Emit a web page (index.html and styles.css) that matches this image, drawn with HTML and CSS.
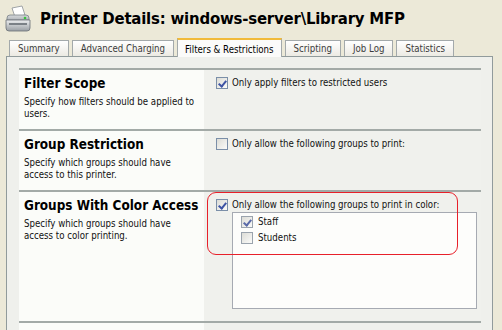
FILE: index.html
```html
<!DOCTYPE html>
<html>
<head>
<meta charset="utf-8">
<link rel="stylesheet" href="styles.css">
</head>
<body>
<div class="header">
  <svg class="printer-icon" width="28" height="28" viewBox="0 0 28 28">
    <defs>
      <linearGradient id="body" x1="0" y1="0" x2="0" y2="1">
        <stop offset="0" stop-color="#eceef0"/>
        <stop offset="1" stop-color="#9a9fa4"/>
      </linearGradient>
      <linearGradient id="top" x1="0" y1="0" x2="0" y2="1">
        <stop offset="0" stop-color="#d6d9dc"/>
        <stop offset="1" stop-color="#b2b6ba"/>
      </linearGradient>
    </defs>
    <path d="M8 3 L18 1 L21 10 L11 12 Z" fill="#ffffff" stroke="#8a8f96" stroke-width="0.8"/>
    <path d="M3 13 Q3 10 6 10 L22 10 Q25 10 25 13 L25 15 L3 15 Z" fill="url(#top)" stroke="#7a8086" stroke-width="0.8"/>
    <path d="M2 15 L26 15 L26 23 Q26 26 23 26 L5 26 Q2 26 2 23 Z" fill="url(#body)" stroke="#6a7076" stroke-width="0.8"/>
    <rect x="5" y="18" width="18" height="2" fill="#7a8086"/>
    <circle cx="21" cy="13" r="1.3" fill="#37c43a"/>
  </svg>
  <h1 class="title">Printer Details: windows-server\Library MFP</h1>
</div>

<div class="tabs">
  <div class="tab">Summary</div>
  <div class="tab">Advanced Charging</div>
  <div class="tab active">Filters &amp; Restrictions</div>
  <div class="tab">Scripting</div>
  <div class="tab">Job Log</div>
  <div class="tab">Statistics</div>
</div>

<div class="panel">
  <div class="row">
    <div class="label">
      <h2>Filter Scope</h2>
      <p>Specify how filters should be applied to users.</p>
    </div>
    <div class="field">
      <div class="check"><span class="box on"></span>Only apply filters to restricted users</div>
    </div>
  </div>
  <div class="row">
    <div class="label">
      <h2>Group Restriction</h2>
      <p>Specify which groups should have access to this printer.</p>
    </div>
    <div class="field">
      <div class="check"><span class="box"></span>Only allow the following groups to print:</div>
    </div>
  </div>
  <div class="row tall">
    <div class="label">
      <h2>Groups With Color Access</h2>
      <p>Specify which groups should have access to color printing.</p>
    </div>
    <div class="field">
      <div class="check"><span class="box on"></span>Only allow the following groups to print in color:</div>
      <div class="listbox">
        <div class="check item"><span class="box on dim"></span>Staff</div>
        <div class="check item"><span class="box dim"></span>Students</div>
      </div>
      <div class="highlight"></div>
    </div>
  </div>
  <div class="row last">
    <div class="label"></div>
    <div class="field"></div>
  </div>
</div>
</body>
</html>
```

FILE: styles.css
```css
* { box-sizing: border-box; }

html, body {
  margin: 0;
  padding: 0;
  height: 100%;
  overflow: hidden;
}

body {
  background: #ece9d8;
  font-family: "DejaVu Sans Condensed", "DejaVu Sans", sans-serif;
  font-stretch: condensed;
  color: #000;
}

.header {
  display: flex;
  align-items: center;
  gap: 8px;
  padding: 3px 0 0 4px;
  height: 34px;
}

.printer-icon { flex: none; }

.title {
  margin: 0;
  font-size: 16.6px;
  font-weight: bold;
  letter-spacing: -0.2px;
  color: #000;
}

.tabs {
  display: flex;
  align-items: flex-end;
  gap: 3px;
  padding-left: 9px;
  margin-top: 4px;
  position: relative;
  z-index: 2;
  height: 18px;
}

.tab {
  height: 16px;
  padding: 0 8px;
  font-size: 9.6px;
  line-height: 15px;
  color: #3c3c3c;
  border: 1px solid #a3a9ab;
  border-bottom: none;
  background: linear-gradient(#ffffff, #eceae3);
}

.tab.active {
  height: 19px;
  margin-bottom: -1px;
  padding: 2px 7px 0;
  color: #000;
  background: #fbfbfa;
  border-color: #a3a9ab;
  border-top: 2px solid #f1ba39;
}

.panel {
  margin: 0 9px 0 6px;
  border: 1px solid #919b9c;
  border-bottom: none;
  background: #eff0ec;
  padding: 11px 11px 0 12px;
  height: 280px;
  overflow: hidden;
}

.row {
  display: flex;
  border-top: 2px solid #a3aaa7;
  height: 61px;
}

.row.tall { height: 131px; }
.row.last { height: 20px; }

.label {
  width: 185px;
  flex: none;
  background: #fbfcf9;
  padding: 5px 4px 0 5px;
}

.label h2 {
  margin: 0;
  font-size: 13.4px;
  font-weight: bold;
  line-height: 17px;
  white-space: nowrap;
}

.label p {
  margin: 4px 0 0;
  font-size: 9.6px;
  line-height: 12px;
  width: 172px;
  color: #111;
}

.field {
  flex: 1;
  position: relative;
  padding: 6px 0 0 12px;
  background: #f0f1ed;
}

.check {
  display: flex;
  align-items: center;
  gap: 4px;
  font-size: 9.6px;
  line-height: 13px;
  color: #111;
}

.box {
  width: 12px;
  height: 12px;
  flex: none;
  border: 1px solid #7b8fa8;
  background: linear-gradient(135deg, #dcdcd6, #fbfbf9);
  position: relative;
}

.box.on::after {
  content: "";
  position: absolute;
  left: 3px;
  top: 1px;
  width: 3px;
  height: 6px;
  border-right: 2px solid #3d53a4;
  border-bottom: 2px solid #3d53a4;
  transform: rotate(40deg);
}

.box.dim { border-color: #9aa3ad; }
.box.dim.on::after { border-color: #5a6aa8; }

.listbox {
  margin: 1px 0 0 16px;
  width: 245px;
  height: 97px;
  border: 1px solid #a6aab2;
  background: #fdfdfb;
  padding: 2px 0 0 8px;
  display: flex;
  flex-direction: column;
  gap: 3px;
}

.item { gap: 5px; }

.highlight {
  position: absolute;
  left: 3px;
  top: 0;
  width: 251px;
  height: 63px;
  border: 1.5px solid #e8202a;
  border-radius: 9px;
}
```
